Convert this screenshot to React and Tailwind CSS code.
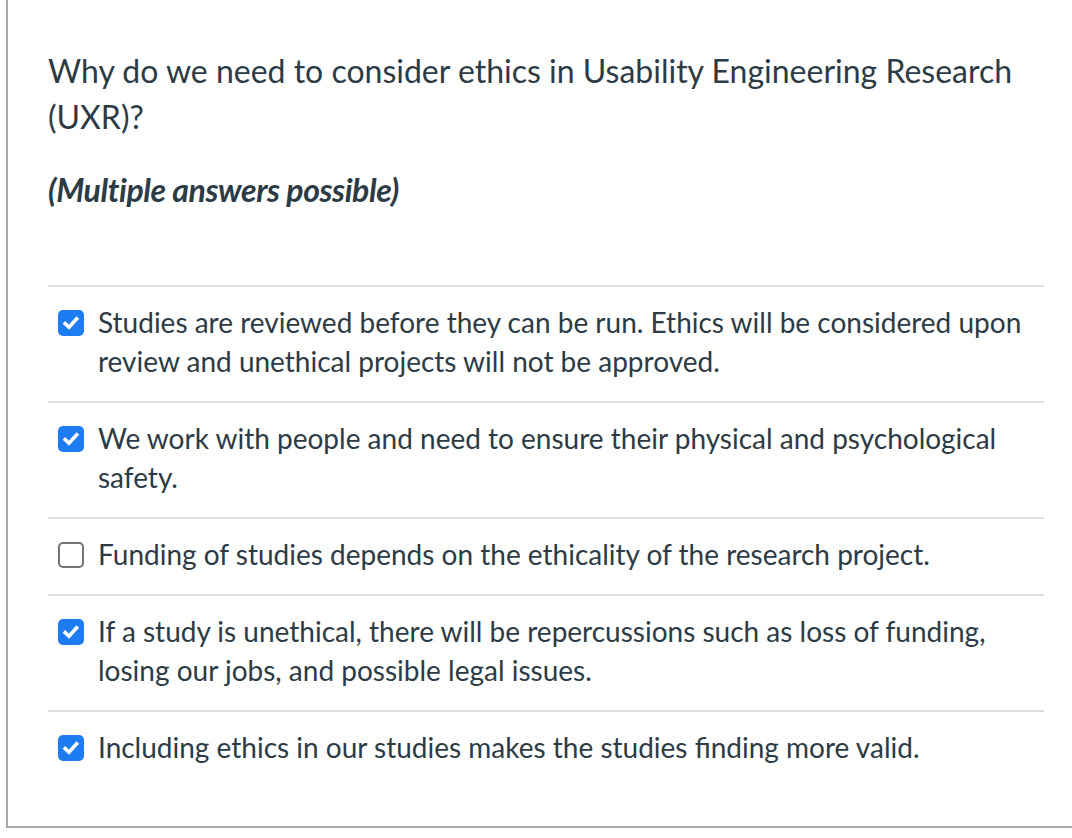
const answers = [
  { text: 'Studies are reviewed before they can be run. Ethics will be considered upon review and unethical projects will not be approved.', checked: true },
  { text: 'We work with people and need to ensure their physical and psychological safety.', checked: true },
  { text: 'Funding of studies depends on the ethicality of the research project.', checked: false },
  { text: 'If a study is unethical, there will be repercussions such as loss of funding, losing our jobs, and possible legal issues.', checked: true },
  { text: 'Including ethics in our studies makes the studies finding more valid.', checked: true },
]

function Box({ checked }) {
  if (!checked) {
    return <span className="block w-[26px] h-[26px] rounded-[5px] border-2 border-[#6f7478] bg-white shrink-0" />
  }
  return (
    <span className="flex items-center justify-center w-[26px] h-[26px] rounded-[5px] bg-[#1d7cf2] shrink-0">
      <svg width="18" height="18" viewBox="0 0 18 18" fill="none">
        <path d="M3.2 9.6 L7 13.2 L14.6 4.8" stroke="white" strokeWidth="3.6" strokeLinecap="square" strokeLinejoin="miter" />
      </svg>
    </span>
  )
}

export default function App() {
  return (
    <div className="w-[1072px] h-[838px] bg-white overflow-hidden" style={{ fontFamily: 'Lato, "Noto Sans", sans-serif' }}>
      <div className="ml-[6px] w-[1100px] h-[828px] border-l-2 border-b-2 border-[#a9a9a9] pl-[40px] pt-[48px] text-[#2d3b45]">
        <div className="w-[996px]">
          <p className="text-[32px] leading-[46px]">
            Why do we need to consider ethics in Usability Engineering Research (UXR)?
          </p>
          <p className="mt-[30px] text-[32px] leading-[39px] font-bold italic tracking-[-0.4px]">(Multiple answers possible)</p>

          <div className="mt-[76px]">
            {answers.map((a, i) => (
              <div key={i} className="flex gap-[14px] pt-[16px] pb-[20px] pl-[10px] border-t-2 border-[#dedede]">
                <div className="h-[39px] flex items-center">
                  <Box checked={a.checked} />
                </div>
                <p className="text-[28px] leading-[39px] pr-[10px]">{a.text}</p>
              </div>
            ))}
          </div>
        </div>
      </div>
    </div>
  )
}
